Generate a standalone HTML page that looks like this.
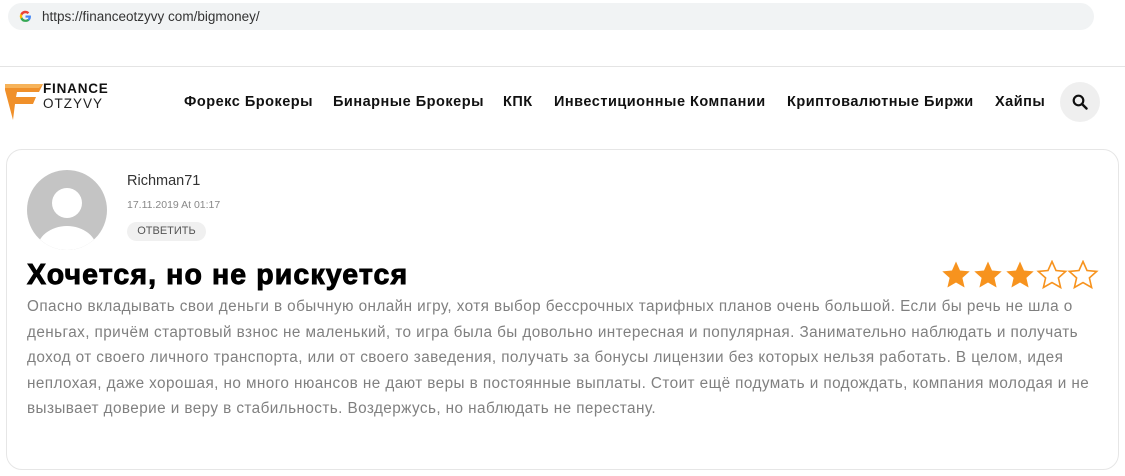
<!DOCTYPE html>
<html><head><meta charset="utf-8"><style>
*{margin:0;padding:0;box-sizing:border-box}
body{width:1125px;height:476px;background:#fff;font-family:"Liberation Sans",sans-serif;position:relative;overflow:hidden}
.url{position:absolute;left:8px;top:3px;width:1086px;height:27px;background:#f1f3f4;border-radius:14px}
.url span{position:absolute;left:34px;top:6px;font-size:13.5px;color:#333}
.hr{position:absolute;left:0;top:66px;width:1125px;height:1px;background:#e4e4e4}
.nav{position:absolute;top:94px;font-size:14.5px;font-weight:bold;color:#111;white-space:nowrap;letter-spacing:0.5px}
.card{position:absolute;left:6px;top:149px;width:1113px;height:321px;border:1px solid #e6e6e6;border-radius:16px}
.txt{position:absolute;left:27px;top:294px;width:1066px;font-size:15.3px;letter-spacing:0.42px;line-height:25.5px;color:#808080}
</style></head><body>
<div class="url">
<svg style="position:absolute;left:11px;top:7px" width="13" height="13" viewBox="0 0 24 24"><path d="M22 12.2c0-.7-.1-1.4-.2-2H12v3.9h5.6a4.8 4.8 0 0 1-2.1 3.1v2.6h3.4c2-1.8 3.1-4.5 3.1-7.6z" fill="#4285f4"/><path d="M12 22c2.8 0 5.2-.9 6.9-2.5l-3.4-2.6c-.9.6-2.1 1-3.5 1-2.7 0-5-1.8-5.8-4.3H2.7v2.7A10 10 0 0 0 12 22z" fill="#34a853"/><path d="M6.2 13.6a6 6 0 0 1 0-3.9V7H2.7a10 10 0 0 0 0 9.3z" fill="#fbbc05"/><path d="M12 5.9c1.5 0 2.9.5 4 1.5l3-3A10 10 0 0 0 2.7 7l3.5 2.7C7 7.7 9.3 5.9 12 5.9z" fill="#ea4335"/></svg>
<span>https://financeotzyvy com/bigmoney/</span></div>
<div class="hr"></div>
<svg style="position:absolute;left:5px;top:82px" width="40" height="38" viewBox="0 0 40 38"><path d="M0 2h38l-4 8H12l-1 5h20l-3 7H10l-2 16L0 8z" fill="#f0902a"/><path d="M0 2h38l-4 4H0z" fill="#f6b35a"/></svg>
<div style="position:absolute;left:43px;top:81px;font-size:13.5px;font-weight:bold;color:#111;letter-spacing:0.8px">FINANCE</div>
<div style="position:absolute;left:43px;top:96px;font-size:13.5px;color:#222;letter-spacing:1px">OTZYVY</div>
<div class="nav" style="left:184px">Форекс Брокеры</div>
<div class="nav" style="left:333px">Бинарные Брокеры</div>
<div class="nav" style="left:503px">КПК</div>
<div class="nav" style="left:554px">Инвестиционные Компании</div>
<div class="nav" style="left:787px">Криптовалютные Биржи</div>
<div class="nav" style="left:995px">Хайпы</div>
<div style="position:absolute;left:1060px;top:82px;width:40px;height:40px;border-radius:50%;background:#efefef"></div>
<svg style="position:absolute;left:1072px;top:94px" width="16" height="16" viewBox="0 0 16 16"><circle cx="6.5" cy="6.5" r="4.8" fill="none" stroke="#111" stroke-width="2.2"/><path d="M10 10l4.5 4.5" stroke="#111" stroke-width="2.4" stroke-linecap="round"/></svg>
<div class="card"></div>
<svg style="position:absolute;left:27px;top:170px" width="80" height="80" viewBox="0 0 80 80"><defs><clipPath id="c"><circle cx="40" cy="40" r="40"/></clipPath></defs><circle cx="40" cy="40" r="40" fill="#c4c4c4"/><g clip-path="url(#c)" fill="#fff"><circle cx="40" cy="33" r="15"/><ellipse cx="40" cy="80" rx="30" ry="24"/></g></svg>
<div style="position:absolute;left:127px;top:173px;font-size:14.5px;color:#333">Richman71</div>
<div style="position:absolute;left:127px;top:199px;font-size:10.5px;color:#888">17.11.2019 At 01:17</div>
<div style="position:absolute;left:127px;top:222px;width:79px;height:19px;border-radius:10px;background:#f0f0f0;font-size:11px;color:#555;text-align:center;line-height:19px">ОТВЕТИТЬ</div>
<div style="position:absolute;left:27px;top:259px;font-size:28.5px;font-weight:900;color:#000;letter-spacing:1.1px;-webkit-text-stroke:0.9px #000">Хочется, но не рискуется</div>
<svg style="position:absolute;left:941px;top:260px" width="158" height="30" viewBox="0 0 158 30">
<defs><path id="s" d="M15 1.5l4 9 9.7.9-7.3 6.5 2.2 9.6L15 22.5l-8.6 5 2.2-9.6L1.3 11.4l9.7-.9z"/></defs>
<use href="#s" fill="#f7931e"/><use href="#s" x="32" fill="#f7931e"/><use href="#s" x="64" fill="#f7931e"/>
<use href="#s" x="96" fill="none" stroke="#f7931e" stroke-width="1.6"/><use href="#s" x="127" fill="none" stroke="#f7931e" stroke-width="1.6"/></svg>
<div class="txt">Опасно вкладывать свои деньги в обычную онлайн игру, хотя выбор бессрочных тарифных планов очень большой. Если бы речь не шла о деньгах, причём стартовый взнос не маленький, то игра была бы довольно интересная и популярная. Занимательно наблюдать и получать доход от своего личного транспорта, или от своего заведения, получать за бонусы лицензии без которых нельзя работать. В целом, идея неплохая, даже хорошая, но много нюансов не дают веры в постоянные выплаты. Стоит ещё подумать и подождать, компания молодая и не вызывает доверие и веру в стабильность. Воздержусь, но наблюдать не перестану.</div>
</body></html>
